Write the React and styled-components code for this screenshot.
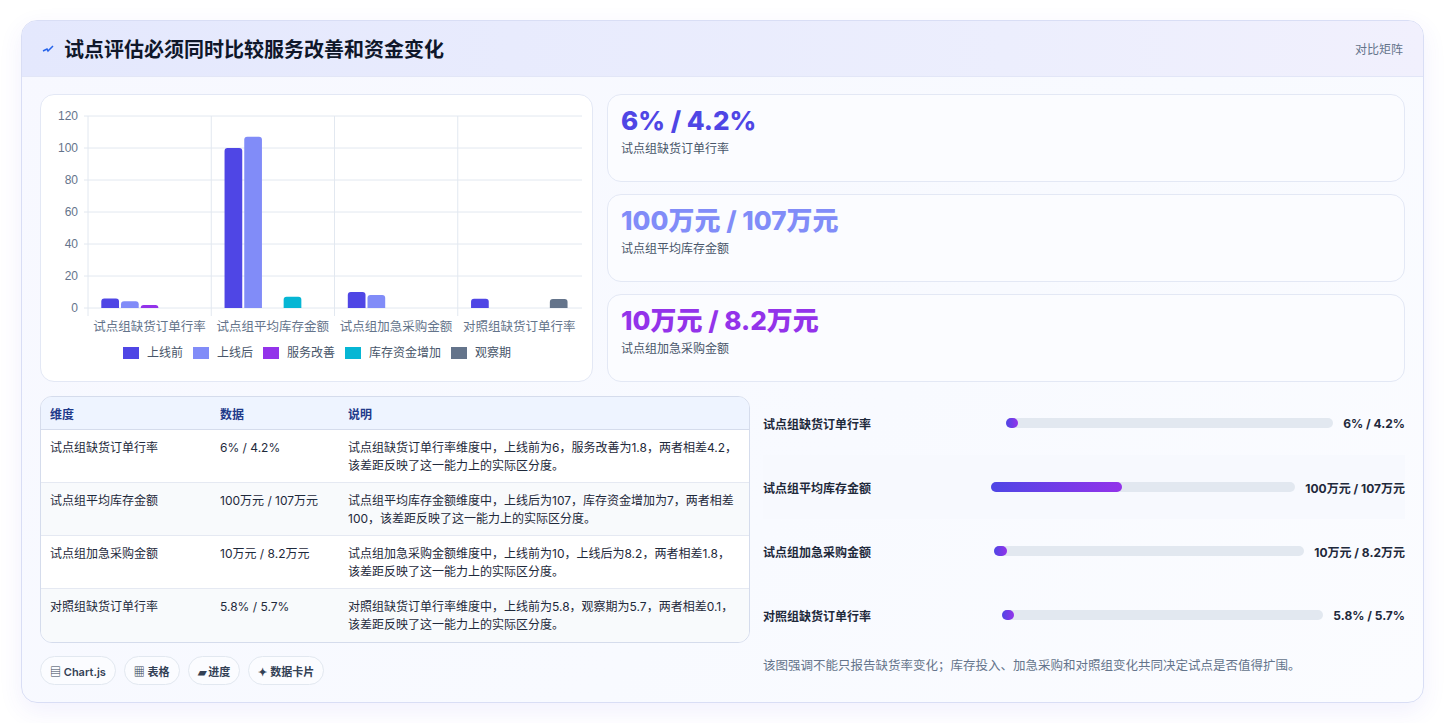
import React from 'react';
import styled, { createGlobalStyle } from 'styled-components';

const Global = createGlobalStyle`
  body { margin: 0; background: #fff; font-family: Inter, "Noto Sans CJK SC", sans-serif; }
  * { box-sizing: border-box; }
`;

const Page = styled.div`
  padding: 20px 20px 20px 21px;
  height: 723px;
`;

const Card = styled.div`
  border: 1px solid #d9def5;
  border-radius: 16px;
  background: linear-gradient(135deg, #f7f8ff, #f8faff 60%, #fbfcff);
  box-shadow: 0 8px 24px rgba(79, 70, 229, 0.08);
  height: 683px;
  overflow: hidden;
`;

const Header = styled.div`
  height: 56px;
  display: flex;
  align-items: center;
  justify-content: space-between;
  padding: 0 20px;
  background: linear-gradient(90deg, #e4e8fd, #eceefd 70%, #f1f0fd);
  border-bottom: 1px solid #e2e6f7;
  h1 {
    margin: 0;
    font-size: 20px;
    font-weight: 700;
    color: #0f172a;
    display: flex;
    align-items: center;
    gap: 10px;
  }
  span { font-size: 12px; color: #64748b; }
`;

const Body = styled.div`
  padding: 17px 18px 0 18px;
  display: grid;
  grid-template-columns: 553px 1fr;
  gap: 14px 14px;
`;

const Panel = styled.div`
  background: #fff;
  border: 1px solid #e3e8f5;
  border-radius: 14px;
`;

const Stats = styled.div`
  display: flex;
  flex-direction: column;
  gap: 12px;
`;

const Stat = styled(Panel)`
  height: 88px;
  padding: 11px 13px;
  background: #fbfcff;
  b {
    display: block;
    font-size: 26px;
    font-weight: 800;
    color: ${p => p.$color};
    line-height: 30px;
  }
  small { display: block; margin-top: 3px; font-size: 12px; color: #475569; }
`;

const Bottom = styled.div`
  grid-column: 1 / -1;
  display: grid;
  grid-template-columns: 710px 1fr;
  gap: 13px;
`;

const Table = styled.table`
  width: 100%;
  border-collapse: separate;
  border-spacing: 0;
  border: 1px solid #d5dcec;
  border-radius: 12px;
  overflow: hidden;
  font-size: 12px;
  color: #1e293b;
  th {
    text-align: left;
    background: #eef4ff;
    color: #1e3a8a;
    font-weight: 700;
    height: 33px;
    padding: 0 9px;
    border-bottom: 1px solid #d5dcec;
  }
  td {
    vertical-align: top;
    padding: 9px 9px 0;
    height: 53px;
    line-height: 18px;
    background: #fff;
    border-bottom: 1px solid #e5e9f2;
  }
  tr:nth-child(even) td { background: #f8fafc; }
  tr:last-child td { border-bottom: none; }
`;

const Chips = styled.div`
  display: flex;
  gap: 8px;
  margin-top: 13px;
`;

const Chip = styled.span`
  height: 29px;
  padding: 0 9px;
  border: 1px solid #e2e8f0;
  border-radius: 15px;
  background: #fbfcff;
  font-size: 11px;
  font-weight: 600;
  color: #334155;
  display: flex;
  align-items: center;
`;

const Progress = styled.div`
  display: flex;
  flex-direction: column;
  margin-top: -5px;
`;

const PRow = styled.div`
  height: 64px;
  display: flex;
  align-items: center;
  gap: 10px;
  font-size: 12px;
  color: #1e293b;
  background: ${p => (p.$shade ? '#f7f9fe' : 'transparent')};
  label { flex: 1 1 0; font-weight: 600; }
  strong { font-weight: 700; white-space: nowrap; }
`;

const Track = styled.div`
  flex: 1.4 1 0;
  height: 10px;
  border-radius: 5px;
  background: #e2e8f0;
  div {
    height: 100%;
    min-width: 12px;
    border-radius: 5px;
    background: linear-gradient(90deg, #4f46e5, #9333ea);
  }
`;

const Note = styled.p`
  margin: 8px 0 0 0;
  font-size: 12.5px;
  color: #64748b;
`;

const ChartPanel = styled(Panel)`
  height: 288px;
  overflow: hidden;
  svg { display: block; }
`;

const colors = ['#4f46e5', '#818cf8', '#9333ea', '#06b6d4', '#64748b'];
const series = ['上线前', '上线后', '服务改善', '库存资金增加', '观察期'];
const cats = ['试点组缺货订单行率', '试点组平均库存金额', '试点组加急采购金额', '对照组缺货订单行率'];
const data = [
  [6, 4.2, 1.8, 0, 0],
  [100, 107, 0, 7, 0],
  [10, 8.2, 0, 0, 0],
  [5.8, 0, 0, 0, 5.7],
];

function Chart() {
  const x0 = 47, y0 = 213, cw = 123.25, k = 1.6;
  const legendX = [82, 152, 222, 304, 410];
  return (
    <svg width="553" height="288" viewBox="0 0 553 288">
      {[0, 20, 40, 60, 80, 100, 120].map(v => (
        <g key={v}>
          <line x1={x0 - 4} x2={541} y1={y0 - v * k} y2={y0 - v * k} stroke="#e2e8f0" />
          <text x={x0 - 10} y={y0 - v * k + 4} fontSize="12" fill="#64748b" textAnchor="end" fontFamily="Liberation Sans, sans-serif">{v}</text>
        </g>
      ))}
      {[0, 1, 2, 3].map(i => (
        <line key={i} x1={x0 + i * cw} x2={x0 + i * cw} y1={y0 - 120 * k} y2={y0 + 8} stroke="#e2e8f0" />
      ))}
      {data.map((row, i) =>
        row.map((v, j) => {
          if (!v) return null;
          const h = v * k;
          const x = x0 + i * cw + 12.3 + j * 19.7 + 1;
          return <path key={i + '-' + j} fill={colors[j]} d={`M${x} ${y0}V${y0 - h + 3}Q${x} ${y0 - h} ${x + 3} ${y0 - h}H${x + 14.7}Q${x + 17.7} ${y0 - h} ${x + 17.7} ${y0 - h + 3}V${y0}Z`} />;
        })
      )}
      {cats.map((c, i) => (
        <text key={c} x={x0 + i * cw + cw / 2} y={y0 + 23} fontSize="12.5" fill="#64748b" textAnchor="middle">{c}</text>
      ))}
      {series.map((s, j) => (
        <g key={s}>
          <rect x={legendX[j]} y={252} width="16" height="12" fill={colors[j]} />
          <text x={legendX[j] + 24} y={262} fontSize="12" fill="#475569">{s}</text>
        </g>
      ))}
    </svg>
  );
}

export default function App() {
  const rows = [
    ['试点组缺货订单行率', '6% / 4.2%', '试点组缺货订单行率维度中，上线前为6，服务改善为1.8，两者相差4.2，该差距反映了这一能力上的实际区分度。'],
    ['试点组平均库存金额', '100万元 / 107万元', '试点组平均库存金额维度中，上线后为107，库存资金增加为7，两者相差100，该差距反映了这一能力上的实际区分度。'],
    ['试点组加急采购金额', '10万元 / 8.2万元', '试点组加急采购金额维度中，上线前为10，上线后为8.2，两者相差1.8，该差距反映了这一能力上的实际区分度。'],
    ['对照组缺货订单行率', '5.8% / 5.7%', '对照组缺货订单行率维度中，上线前为5.8，观察期为5.7，两者相差0.1，该差距反映了这一能力上的实际区分度。'],
  ];
  const bars = [2, 43, 4, 2];
  return (
    <Page>
      <Global />
      <Card>
        <Header>
          <h1>
            <svg width="12" height="10" viewBox="0 0 12 10"><path d="M1 7 L5 5 L6 7 L11 2" stroke="#2563eb" strokeWidth="1.5" fill="none" /></svg>
            试点评估必须同时比较服务改善和资金变化
          </h1>
          <span>对比矩阵</span>
        </Header>
        <Body>
          <ChartPanel>
            <Chart />
          </ChartPanel>
          <Stats>
            <Stat $color="#4f46e5"><b>6% / 4.2%</b><small>试点组缺货订单行率</small></Stat>
            <Stat $color="#818cf8"><b>100万元 / 107万元</b><small>试点组平均库存金额</small></Stat>
            <Stat $color="#9333ea"><b>10万元 / 8.2万元</b><small>试点组加急采购金额</small></Stat>
          </Stats>
          <Bottom>
            <div>
              <Table>
                <thead>
                  <tr><th style={{ width: 170 }}>维度</th><th style={{ width: 128 }}>数据</th><th>说明</th></tr>
                </thead>
                <tbody>
                  {rows.map(r => (
                    <tr key={r[0]}><td>{r[0]}</td><td>{r[1]}</td><td>{r[2]}</td></tr>
                  ))}
                </tbody>
              </Table>
              <Chips>
                <Chip>▤ Chart.js</Chip>
                <Chip>▦ 表格</Chip>
                <Chip>▰ 进度</Chip>
                <Chip>✦ 数据卡片</Chip>
              </Chips>
            </div>
            <Progress>
              {rows.map((r, i) => (
                <PRow key={r[0]} $shade={i === 1}>
                  <label>{r[0]}</label>
                  <Track><div style={{ width: bars[i] + '%' }} /></Track>
                  <strong>{r[1]}</strong>
                </PRow>
              ))}
              <Note>该图强调不能只报告缺货率变化；库存投入、加急采购和对照组变化共同决定试点是否值得扩围。</Note>
            </Progress>
          </Bottom>
        </Body>
      </Card>
    </Page>
  );
}
